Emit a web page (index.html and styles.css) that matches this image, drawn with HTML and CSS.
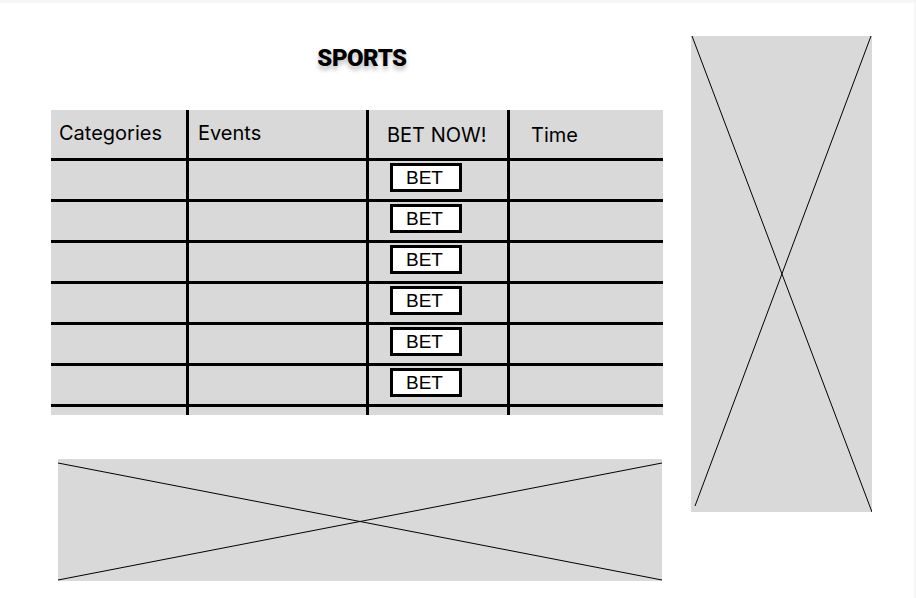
FILE: index.html
```html
<!DOCTYPE html>
<html lang="en">
<head>
  <meta charset="UTF-8" />
  <meta name="viewport" content="width=device-width, initial-scale=1.0" />
  <title>Sports</title>
  <link rel="stylesheet" href="styles.css">
</head>
<body>
  <div class="page">
    <!-- Columna principal -->
    <main class="board">
      <h1 class="title">SPORTS</h1>

      <!-- Tabla de apuestas -->
      <div class="bets">
        <div class="cell head head-a">Categories</div>
        <div class="cell head head-b">Events</div>
        <div class="cell head head-c">BET NOW!</div>
        <div class="cell head head-d">Time</div>

        <div class="cell"></div><div class="cell"></div>
        <div class="cell bet-cell"><button class="bet">BET</button></div><div class="cell"></div>

        <div class="cell"></div><div class="cell"></div>
        <div class="cell bet-cell"><button class="bet">BET</button></div><div class="cell"></div>

        <div class="cell"></div><div class="cell"></div>
        <div class="cell bet-cell"><button class="bet">BET</button></div><div class="cell"></div>

        <div class="cell"></div><div class="cell"></div>
        <div class="cell bet-cell"><button class="bet">BET</button></div><div class="cell"></div>

        <div class="cell"></div><div class="cell"></div>
        <div class="cell bet-cell"><button class="bet">BET</button></div><div class="cell"></div>

        <div class="cell"></div><div class="cell"></div>
        <div class="cell bet-cell"><button class="bet">BET</button></div><div class="cell"></div>

        <div class="cell"></div><div class="cell"></div><div class="cell"></div><div class="cell"></div>
      </div>

      <!-- Banner inferior -->
      <div class="placeholder banner">
        <svg viewBox="0 0 604 122" preserveAspectRatio="none">
          <line x1="0" y1="4" x2="604" y2="121" />
          <line x1="0" y1="121" x2="604" y2="4" />
        </svg>
      </div>
    </main>

    <!-- Banner lateral -->
    <aside class="placeholder side">
      <svg viewBox="0 0 181 476" preserveAspectRatio="none">
        <line x1="1" y1="0" x2="181" y2="476" />
        <line x1="180" y1="0" x2="4" y2="470" />
      </svg>
    </aside>
  </div>
</body>
</html>
```

FILE: styles.css
```css
/* ===== General ===== */
* {
  box-sizing: border-box;
}
body {
  margin: 0;
  width: 916px;
  height: 598px;
  background: #fff;
  border-top: 3px solid #f6f6f6;
  border-right: 2px solid #f6f6f6;
  font-family: Inter, "Noto Sans", sans-serif;
  overflow: hidden;
}
.page {
  display: flex;
  align-items: flex-start;
  padding: 33px 0 0 51px;
}
/* ===== Columna principal ===== */
.board {
  display: flex;
  flex-direction: column;
  width: 612px;
}
.title {
  margin: 8px 0 0;
  padding-left: 10px;
  text-align: center;
  font-family: Roboto, "Liberation Sans", sans-serif;
  font-weight: 900;
  font-size: 24px;
  line-height: 28px;
  letter-spacing: -0.5px;
  color: #000;
  text-shadow: 0 4px 4px rgba(0, 0, 0, 0.25);
}
/* ===== Tabla ===== */
.bets {
  display: grid;
  grid-template-columns: 135px 177px 138px 153px;
  grid-template-rows: 48px repeat(6, 38px) 8px;
  gap: 3px;
  margin-top: 38px;
  background: #000;
}
.cell {
  background: #d9d9d9;
}
.head {
  font-size: 20px;
  color: #000;
  padding-top: 11px;
}
.head-a { padding-left: 8px; }
.head-b { padding-left: 9px; }
.head-c { padding-left: 18px; padding-top: 13px; }
.head-d { padding-left: 21px; padding-top: 13px; }
.bet-cell {
  padding: 2px 0 0 21px;
}
.bet {
  display: block;
  width: 72px;
  height: 29px;
  padding: 0 3px 0 0;
  border: 3px solid #000;
  border-radius: 0;
  background: #fff;
  font-family: "Liberation Sans", Arial, sans-serif;
  font-size: 19px;
  line-height: 21px;
  color: #000;
}
/* ===== Placeholders ===== */
.placeholder {
  background: #d9d9d9;
}
.placeholder svg {
  display: block;
  width: 100%;
  height: 100%;
}
.placeholder line {
  stroke: #000;
  stroke-width: 1;
  vector-effect: non-scaling-stroke;
}
.banner {
  width: 604px;
  height: 122px;
  margin: 44px 0 0 7px;
}
.side {
  width: 181px;
  height: 476px;
  margin-left: 28px;
}
```
